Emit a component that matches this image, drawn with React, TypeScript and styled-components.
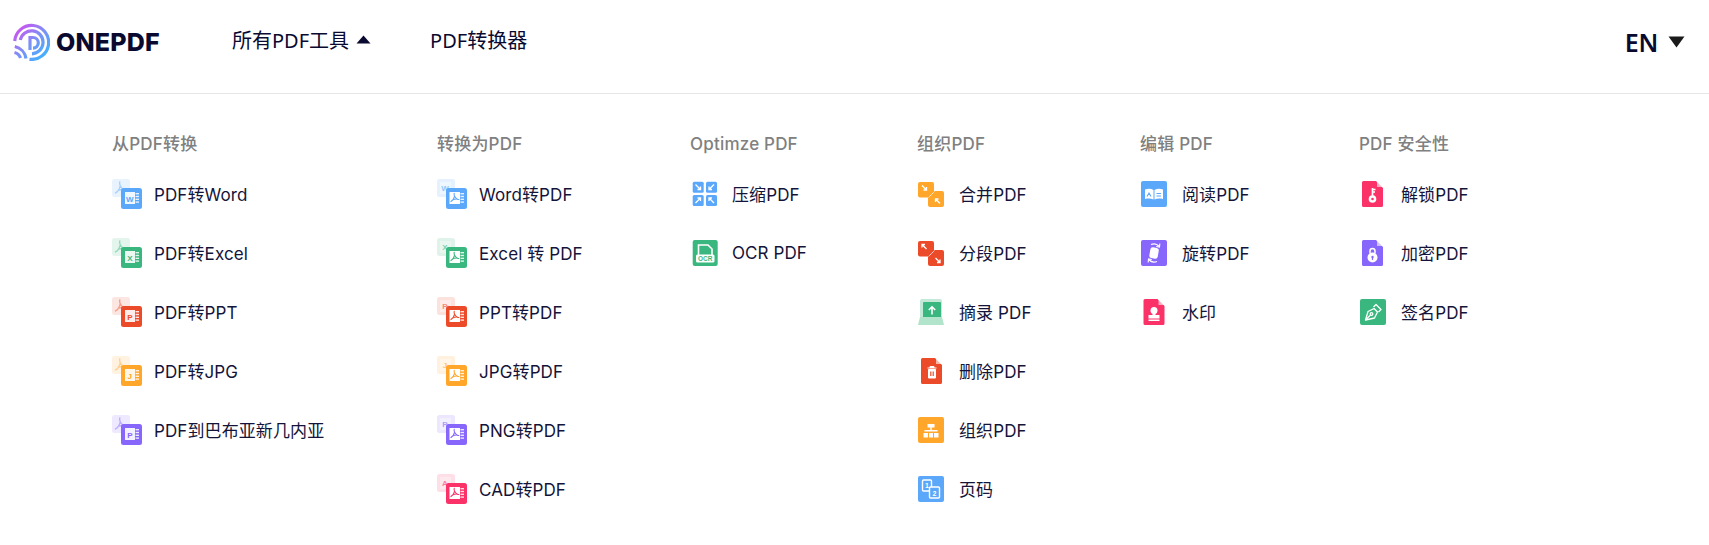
import React from 'react'
import styled, { createGlobalStyle } from 'styled-components'

const BLUE = '#5ba8fb'
const GREEN = '#3ab77e'
const RED = '#ec4b2a'
const ORANGE = '#ffa62b'
const PURPLE = '#8766fb'
const PINK = '#fb3268'

const GlobalStyle = createGlobalStyle`
  html, body {
    margin: 0;
    padding: 0;
    background: #fff;
    overflow: hidden;
  }
  body {
    font-family: Inter, "Noto Sans CJK SC", sans-serif;
  }
`

const Header = styled.header`
  box-sizing: border-box;
  display: flex;
  align-items: center;
  height: 94px;
  border-bottom: 1px solid #e6e6e6;
  padding: 0 24px 9px 13px;
`

const Brand = styled.div`
  display: flex;
  align-items: center;
  gap: 6px;
  width: 219px;
`

const BrandName = styled.span`
  font-family: Inter, sans-serif;
  font-weight: 800;
  font-size: 25px;
  letter-spacing: 0.2px;
  color: #0a0a30;
`

const Nav = styled.nav`
  display: flex;
  align-items: center;
  gap: 59px;
  flex: 1;
  padding-bottom: 5px;
`

const NavLink = styled.a`
  display: flex;
  align-items: center;
  gap: 7px;
  font-family: "Noto Sans", "Noto Sans CJK SC", sans-serif;
  font-size: 20px;
  color: #0a0a30;
`

const Lang = styled.div`
  display: flex;
  align-items: center;
  gap: 10px;
  font-family: "Noto Sans", sans-serif;
  font-weight: 600;
  font-size: 25px;
  letter-spacing: -0.3px;
  color: #0a0a30;
`

const Menu = styled.main`
  display: grid;
  grid-template-columns: 325px 253px 227px 223px 219px 200px;
  padding: 37px 0 0 112px;
`

const Column = styled.section`
  display: flex;
  flex-direction: column;
`

const Heading = styled.h3`
  margin: 0 0 7px;
  font-size: 17px;
  font-weight: 500;
  line-height: 26px;
  letter-spacing: 0.2px;
  color: #808080;
  white-space: nowrap;
`

const Item = styled.a`
  display: flex;
  align-items: center;
  gap: 12px;
  height: 59px;
  font-size: 17px;
  letter-spacing: 0.1px;
  color: #14143a;
  white-space: nowrap;
`

const IconBox = styled.svg`
  flex: none;
  width: 30px;
  height: 30px;
  display: block;
`

const IconLabel = styled.text`
  font-family: "Liberation Sans", sans-serif;
  font-weight: 700;
  text-anchor: middle;
  letter-spacing: 0;
`

const Logo = () => (
  <svg width="37" height="38" viewBox="0 0 37 38" fill="none">
    <defs>
      <linearGradient id="logoGrad" gradientUnits="userSpaceOnUse" x1="4" y1="4" x2="32" y2="34">
        <stop offset="0" stopColor="#d04ff0" />
        <stop offset="0.5" stopColor="#7f8ff6" />
        <stop offset="1" stopColor="#3fb2fd" />
      </linearGradient>
    </defs>
    <g stroke="url(#logoGrad)" strokeWidth="3.2" strokeLinecap="butt">
      <path d="M16.500 36.300A17 17 0 1 0 1.700 18" />
      <path d="M19 30.800A11.500 11.500 0 1 0 7.300 17" />
      <path d="M17 27V14.500h3a5.300 5.300 0 0 1 0 10.600" />
      <path d="M1.800 23.500A14.500 14.500 0 0 1 13 35.500" />
      <path d="M1.500 29.500A8.500 8.500 0 0 1 7.500 35" />
    </g>
  </svg>
)

const Caret = ({ up, width, height, color }: { up?: boolean; width: number; height: number; color: string }) => (
  <svg width={width} height={height} viewBox="0 0 16 10" preserveAspectRatio="none">
    <path d={up ? 'M8 .5 15.500 9.500H.5Z' : 'M.5 .5H15.500L8 9.500Z'} fill={color} />
  </svg>
)

const Acrobat = ({ x, y, s, color, opacity = 1 }: { x: number; y: number; s: number; color: string; opacity?: number }) => (
  <path
    transform={`translate(${x} ${y}) scale(${s})`}
    d="M5 0C4 3 7 7 10 8.500M5.500 4C5 7 3 10 .5 11.500M4 8.500C6.500 7.800 9 7.800 11.500 8.500"
    fill="none"
    stroke={color}
    strokeWidth={1.5}
    strokeLinecap="round"
    opacity={opacity}
  />
)

// front tile of the converter icons: a page on the left, stripes on the right
const Stripes = () => (
  <g fill="#fff" opacity={0.85}>
    <rect x="23.500" y="14" width="3.500" height="1.400" />
    <rect x="23.500" y="16.800" width="3.500" height="1.400" />
    <rect x="23.500" y="19.600" width="3.500" height="1.400" />
    <rect x="23.500" y="22.400" width="3.500" height="1.400" />
  </g>
)

const FromPdf = ({ color, letter }: { color: string; letter: string }) => (
  <IconBox viewBox="0 0 30 30">
    <rect x="0" y="0" width="18" height="18" rx="2.500" fill={color} opacity={0.14} />
    <Acrobat x={3} y={3} s={0.95} color={color} opacity={0.45} />
    <rect x="9" y="9" width="21" height="21" rx="2.500" fill={color} />
    <rect x="13" y="13" width="10" height="12" fill="#fff" opacity={0.9} />
    <Stripes />
    <IconLabel x="17.800" y="22.600" fontSize="8" fill={color}>{letter}</IconLabel>
  </IconBox>
)

const ToPdf = ({ color, letter }: { color: string; letter: string }) => (
  <IconBox viewBox="0 0 30 30">
    <rect x="0" y="0" width="18" height="18" rx="2.500" fill={color} opacity={0.16} />
    <rect x="3" y="3" width="11" height="12" fill="#fff" opacity={0.35} />
    <IconLabel x="8" y="12" fontSize="8" fill={color} opacity={0.6}>{letter}</IconLabel>
    <rect x="9" y="9" width="21" height="21" rx="2.500" fill={color} />
    <rect x="12.500" y="13" width="10.500" height="12" fill="#fff" />
    <Stripes />
    <Acrobat x={13.600} y={14.300} s={0.72} color={color} />
  </IconBox>
)

const Arrow = ({ x1, y1, x2, y2, h = 3, w = 1.3 }: { x1: number; y1: number; x2: number; y2: number; h?: number; w?: number }) => {
  const dx = Math.sign(x2 - x1)
  const dy = Math.sign(y2 - y1)
  return (
    <path
      d={`M${x1} ${y1}L${x2} ${y2}M${x2 - dx * h} ${y2}L${x2} ${y2}L${x2} ${y2 - dy * h}`}
      stroke="#fff"
      strokeWidth={w}
      fill="none"
    />
  )
}

const CompressIcon = () => (
  <IconBox viewBox="0 0 30 30">
    <g fill={BLUE}>
      <rect x="2.700" y="2.700" width="11" height="11" rx="1.500" />
      <rect x="16" y="2.700" width="11" height="11" rx="1.500" />
      <rect x="2.700" y="16" width="11" height="11" rx="1.500" />
      <rect x="16" y="16" width="11" height="11" rx="1.500" />
    </g>
    <Arrow x1={5.500} y1={5.500} x2={10.500} y2={10.500} />
    <Arrow x1={24} y1={5.500} x2={19} y2={10.500} />
    <Arrow x1={5.500} y1={24} x2={10.500} y2={19} />
    <Arrow x1={24} y1={24} x2={19} y2={19} />
  </IconBox>
)

const OcrIcon = () => (
  <IconBox viewBox="0 0 30 30">
    <rect x="2.700" y="2" width="25" height="26" rx="2" fill={GREEN} />
    <path d="M8.500 18V7h9.500l4 4v7" fill="none" stroke="#fff" strokeWidth="1.600" />
    <rect x="6" y="16.500" width="18.500" height="8" rx="1.500" fill="#fff" />
    <IconLabel x="15.200" y="23" fontSize="6.400" fill={GREEN}>OCR</IconLabel>
  </IconBox>
)

const MergeIcon = ({ color, out }: { color: string; out?: boolean }) => (
  <IconBox viewBox="0 0 30 30">
    <rect x="1" y="3" width="16" height="15.500" rx="2" fill={color} />
    <rect x="11" y="12" width="16" height="16" rx="2" fill={color} />
    <path d="M11.500 18.500l6-6" stroke="#fff" strokeWidth="1" opacity={0.7} />
    {out ? (
      <>
        <Arrow x1={9.500} y1={11} x2={5} y2={6.500} />
        <Arrow x1={18.500} y1={20} x2={23} y2={24.500} />
      </>
    ) : (
      <>
        <Arrow x1={5} y1={6.500} x2={9.500} y2={11} />
        <Arrow x1={23} y1={24.500} x2={18.500} y2={20} />
      </>
    )}
  </IconBox>
)

const ExtractIcon = () => (
  <IconBox viewBox="0 0 30 30">
    <rect x="3" y="2" width="22" height="22" rx="2" fill={GREEN} opacity={0.3} />
    <rect x="6" y="5" width="18" height="19" rx="1" fill={GREEN} />
    <path d="M3 20h22l2 8H1Z" fill="#b2e4cb" />
    <path d="M15 17.500V10M11.800 13l3.200-3.200 3.200 3.200" stroke="#fff" strokeWidth="1.600" fill="none" />
  </IconBox>
)

const Doc = ({ x, color, children }: { x: number; color: string; children?: React.ReactNode }) => (
  <IconBox viewBox="0 0 30 30">
    <path
      d={`M${x + 1.5} 2H${x + 14}L${x + 21} 9V26.500a1.500 1.500 0 0 1-1.500 1.500H${x + 1.5}a1.500 1.500 0 0 1-1.500-1.500V3.500a1.500 1.500 0 0 1 1.500-1.500Z`}
      fill={color}
    />
    <path d={`M${x + 15} 2L${x + 21} 8H${x + 15}Z`} fill="#fff" opacity={0.6} />
    {children}
  </IconBox>
)

const OrganizeIcon = () => (
  <IconBox viewBox="0 0 30 30">
    <rect x="1" y="2" width="26" height="26" rx="2" fill={ORANGE} />
    <path d="M10.500 9h7v3.500h-7ZM7.500 15h13v1.500h-13ZM6.500 18h4.500v4.500H6.500ZM12 18h4v4.500h-4ZM17 18h4.500v4.500H17Z" fill="#fff" />
    <path d="M14 12v3" stroke="#fff" strokeWidth="1.400" fill="none" />
  </IconBox>
)

const PagesIcon = () => (
  <IconBox viewBox="0 0 30 30">
    <rect x="1" y="2" width="26" height="26" rx="2" fill={BLUE} />
    <rect x="5.500" y="6" width="9" height="11" rx="1" fill="none" stroke="#fff" strokeWidth="1.400" />
    <rect x="12.500" y="13" width="10" height="11" rx="1" fill={BLUE} stroke="#fff" strokeWidth="1.400" />
    <IconLabel x="10" y="13.500" fontSize="7" fill="#fff">1</IconLabel>
    <IconLabel x="17.500" y="21.500" fontSize="7" fill="#fff">2</IconLabel>
  </IconBox>
)

const ReadIcon = () => (
  <IconBox viewBox="0 0 30 30">
    <rect x="1" y="2" width="26" height="26" rx="2" fill={BLUE} />
    <path d="M5 10.500c3-1 6-1 8.500 .5V20.500c-2.500-1.200-5.500-1.200-8.500-.5ZM23 10.500c-3-1-6-1-8.500 .5V20.500c2.500-1.200 5.500-1.200 8.500-.5Z" fill="#fff" />
    <path d="M7 17.500l2-3.500 2 3.500M16.500 14.500h4.500M16.500 17h4.500" stroke={BLUE} strokeWidth="1.100" fill="none" />
  </IconBox>
)

const RotateIcon = () => (
  <IconBox viewBox="0 0 30 30">
    <rect x="1" y="2" width="26" height="26" rx="2" fill={PURPLE} />
    <rect x="9.800" y="9.500" width="8.500" height="11" rx="2.500" fill="#fff" transform="rotate(10 14 15)" />
    <path d="M11 6.500c3-1.200 6-.5 8 1.700M17 23.500c-3 1.200-6 .5-8-1.700" stroke="#fff" strokeWidth="1.300" fill="none" />
    <path d="M19.800 5.500l-.3 3.500-3.300-.5M8.200 24.500l.3-3.500 3.300 .5" stroke="#fff" strokeWidth="1.100" fill="none" />
  </IconBox>
)

const SignIcon = () => (
  <IconBox viewBox="0 0 30 30">
    <rect x="1" y="2" width="26" height="26" rx="2" fill={GREEN} />
    <g fill="none" stroke="#fff" strokeWidth="1.300" strokeLinejoin="round">
      <path d="M6.500 23l2.500-8.500 6-3 3.500 3.500-3 6Z" />
      <path d="M14.500 10l2.500-2.500 5 5-2.500 2.500" />
      <path d="M6.500 23l5-5" />
      <circle cx="12.500" cy="17" r="1.300" />
    </g>
  </IconBox>
)

type Entry = { label: string; icon: React.ReactNode }
type Group = { title: string; items: Entry[] }

const groups: Group[] = [
  {
    title: '从PDF转换',
    items: [
      { label: 'PDF转Word', icon: <FromPdf color={BLUE} letter="W" /> },
      { label: 'PDF转Excel', icon: <FromPdf color={GREEN} letter="X" /> },
      { label: 'PDF转PPT', icon: <FromPdf color={RED} letter="P" /> },
      { label: 'PDF转JPG', icon: <FromPdf color={ORANGE} letter="J" /> },
      { label: 'PDF到巴布亚新几内亚', icon: <FromPdf color={PURPLE} letter="P" /> },
    ],
  },
  {
    title: '转换为PDF',
    items: [
      { label: 'Word转PDF', icon: <ToPdf color={BLUE} letter="W" /> },
      { label: 'Excel 转 PDF', icon: <ToPdf color={GREEN} letter="X" /> },
      { label: 'PPT转PDF', icon: <ToPdf color={RED} letter="P" /> },
      { label: 'JPG转PDF', icon: <ToPdf color={ORANGE} letter="J" /> },
      { label: 'PNG转PDF', icon: <ToPdf color={PURPLE} letter="P" /> },
      { label: 'CAD转PDF', icon: <ToPdf color={PINK} letter="A" /> },
    ],
  },
  {
    title: 'Optimze PDF',
    items: [
      { label: '压缩PDF', icon: <CompressIcon /> },
      { label: 'OCR PDF', icon: <OcrIcon /> },
    ],
  },
  {
    title: '组织PDF',
    items: [
      { label: '合并PDF', icon: <MergeIcon color={ORANGE} /> },
      { label: '分段PDF', icon: <MergeIcon color={RED} out /> },
      { label: '摘录 PDF', icon: <ExtractIcon /> },
      {
        label: '删除PDF',
        icon: (
          <Doc x={4} color={RED}>
            <path d="M10.500 12h9M13 12v-1.500h4V12M11.500 13.500h7V22h-7Z" fill="#fff" stroke="#fff" strokeWidth="1" />
            <path d="M13.800 15.500v4.500M16.200 15.500v4.500" stroke={RED} strokeWidth="1.200" />
          </Doc>
        ),
      },
      { label: '组织PDF', icon: <OrganizeIcon /> },
      { label: '页码', icon: <PagesIcon /> },
    ],
  },
  {
    title: '编辑 PDF',
    items: [
      { label: '阅读PDF', icon: <ReadIcon /> },
      { label: '旋转PDF', icon: <RotateIcon /> },
      {
        label: '水印',
        icon: (
          <Doc x={3.5} color={PINK}>
            <circle cx="14" cy="13.500" r="3.500" fill="#fff" />
            <path d="M12.500 15h3v3h4v3.500h-11V18h4ZM8.500 22.500h11V24h-11Z" fill="#fff" />
          </Doc>
        ),
      },
    ],
  },
  {
    title: 'PDF 安全性',
    items: [
      {
        label: '解锁PDF',
        icon: (
          <Doc x={3} color={PINK}>
            <circle cx="13.500" cy="20" r="3.800" fill="#fff" />
            <circle cx="13.500" cy="20" r="1.300" fill={PINK} />
            <path d="M13.500 17V9M13.500 10.500h3M13.500 13h2.500" stroke="#fff" strokeWidth="1.700" />
          </Doc>
        ),
      },
      {
        label: '加密PDF',
        icon: (
          <Doc x={3} color={PURPLE}>
            <circle cx="13.500" cy="19.500" r="5" fill="#fff" />
            <path d="M11 15.500V13a2.500 2.500 0 0 1 5 0v2.500" stroke="#fff" strokeWidth="1.500" fill="none" />
            <circle cx="13.500" cy="19" r="1.200" fill={PURPLE} />
            <path d="M13.500 19v3" stroke={PURPLE} strokeWidth="1.200" />
          </Doc>
        ),
      },
      { label: '签名PDF', icon: <SignIcon /> },
    ],
  },
]

const App: React.FC = () => (
  <>
    <GlobalStyle />
    <Header>
      <Brand>
        <Logo />
        <BrandName>ONEPDF</BrandName>
      </Brand>
      <Nav>
        <NavLink>
          所有PDF工具 <Caret up width={15} height={9} color="#0a0a30" />
        </NavLink>
        <NavLink>PDF转换器</NavLink>
      </Nav>
      <Lang>
        EN <Caret width={17} height={12} color="#1a1a1a" />
      </Lang>
    </Header>
    <Menu>
      {groups.map(group => (
        <Column key={group.title}>
          <Heading>{group.title}</Heading>
          {group.items.map(item => (
            <Item key={item.label}>
              {item.icon}
              {item.label}
            </Item>
          ))}
        </Column>
      ))}
    </Menu>
  </>
)

export default App
